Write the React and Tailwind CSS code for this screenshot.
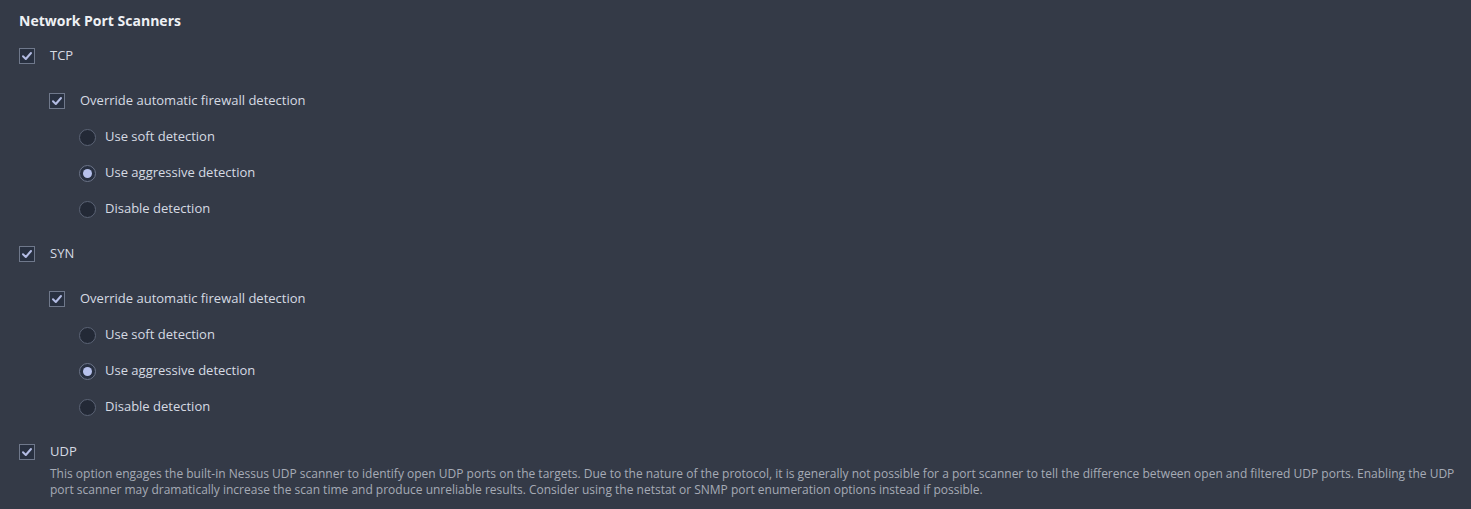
import React from "react";

const font = { fontFamily: '"Open Sans", "Noto Sans", sans-serif' };

function Checkbox() {
  return (
    <span className="flex h-[16px] w-[16px] shrink-0 items-center justify-center border border-[#6f788b] bg-[#283040]">
      <svg width="12" height="12" viewBox="0 0 12 12">
        <path d="M2 6.3 L4.8 9 L10 3" fill="none" stroke="#b3bce4" strokeWidth="2" strokeLinecap="round" strokeLinejoin="round" />
      </svg>
    </span>
  );
}

function Radio({ checked }) {
  return (
    <span className={`flex h-[17px] w-[17px] shrink-0 items-center justify-center rounded-full border ${checked ? "border-[#6c7488] bg-[#283041]" : "border-[#5b6375] bg-[#232936]"}`}>
      {checked && <span className="h-[9px] w-[9px] rounded-full bg-[#b7c1ec]" />}
    </span>
  );
}

function CheckRow({ label, className = "" }) {
  return (
    <div className={`flex h-[36px] items-center gap-[15px] ${className}`}>
      <Checkbox />
      <span className="text-[13px] text-[#d6dae3]">{label}</span>
    </div>
  );
}

function RadioRow({ label, checked }) {
  return (
    <div className="flex h-[36px] items-center gap-[9px] pl-[60px]">
      <Radio checked={checked} />
      <span className="text-[13px] text-[#d6dae3]">{label}</span>
    </div>
  );
}

function Group({ name, first }) {
  return (
    <div className={first ? "mt-[8px]" : "mt-[9px]"}>
      <CheckRow label={name} />
      <CheckRow label="Override automatic firewall detection" className="mt-[9px] pl-[30px]" />
      <RadioRow label="Use soft detection" />
      <RadioRow label="Use aggressive detection" checked />
      <RadioRow label="Disable detection" />
    </div>
  );
}

export default function App() {
  return (
    <div style={font} className="h-[509px] w-full overflow-hidden bg-[#343a47] pl-[19px] pr-[14px] pt-[12px]">
      <div className="h-[18px] text-[14px] font-bold leading-[18px] text-[#eef0f4]">Network Port Scanners</div>
      <Group name="TCP" first />
      <Group name="SYN" />
      <div className="mt-[17px] flex h-[20px] items-center gap-[15px]">
        <Checkbox />
        <span className="text-[13px] text-[#d6dae3]">UDP</span>
      </div>
      <p className="mt-[4px] pl-[31px] text-[12px] leading-[16px] text-[#a6abb6]">
        This option engages the built-in Nessus UDP scanner to identify open UDP ports on the targets. Due to the nature of the protocol, it is generally not possible for a port scanner to tell the difference between open and filtered UDP ports. Enabling the UDP port scanner may dramatically increase the scan time and produce unreliable results. Consider using the netstat or SNMP port enumeration options instead if possible.
      </p>
    </div>
  );
}
